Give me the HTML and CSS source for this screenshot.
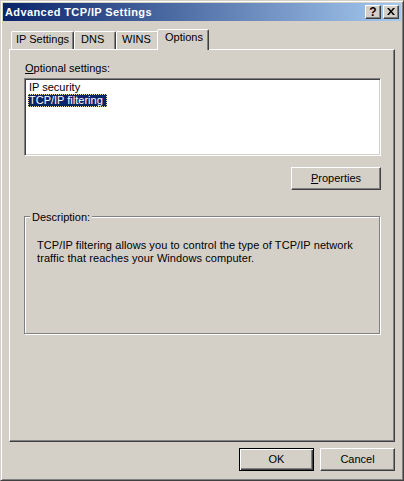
FILE: index.html
```html
<!DOCTYPE html>
<html>
<head>
<meta charset="utf-8">
<link rel="stylesheet" href="styles.css">
</head>
<body>
<div class="window">
  <div class="titlebar">
    <span class="title">Advanced TCP/IP Settings</span>
    <div class="caption-buttons">
      <div class="cbtn help">?</div>
      <div class="cbtn close">
        <svg width="8" height="7" viewBox="0 0 8 7"><path d="M0 0h2l2 2.4 2-2.4h2L5 3.5 8 7H6L4 4.6 2 7H0l3-3.5z" fill="#000"/></svg>
      </div>
    </div>
  </div>
  <div class="body">
    <div class="tabs">
      <div class="tab tab-ip">IP Settings</div>
      <div class="tab tab-dns">DNS</div>
      <div class="tab tab-wins">WINS</div>
      <div class="tab tab-options active">Options</div>
    </div>
    <div class="panel">
      <div class="label"><u>O</u>ptional settings:</div>
      <div class="listbox">
        <div class="item"><span>IP security</span></div>
        <div class="item selected"><span>TCP/IP filtering</span></div>
      </div>
      <div class="row-right"><button class="btn props"><u>P</u>roperties</button></div>
      <div class="group">
        <div class="group-label">Description:</div>
        <p class="desc">TCP/IP filtering allows you to control the type of TCP/IP network<br>traffic that reaches your Windows computer.</p>
      </div>
    </div>
    <div class="footer">
      <button class="btn default">OK</button>
      <button class="btn">Cancel</button>
    </div>
  </div>
</div>
</body>
</html>
```
FILE: styles.css
```css
html, body {
  margin: 0;
  padding: 0;
  background: #d4d0c8;
}
body {
  font-family: "Liberation Sans", Arial, sans-serif;
  font-size: 11px;
  line-height: 13px;
  color: #000;
}
.window {
  width: 404px;
  height: 481px;
  box-sizing: border-box;
  border: 1px solid;
  border-color: #d4d0c8 #404040 #404040 #d4d0c8;
  box-shadow: inset 1px 1px #fff, inset -1px -1px #808080;
  padding: 2px;
  background: #d4d0c8;
  display: flex;
  flex-direction: column;
}
.titlebar {
  height: 18px;
  flex: none;
  background: linear-gradient(to right, #0a246a, #a6caf0);
  display: flex;
  align-items: center;
  justify-content: space-between;
  padding-left: 2px;
}
.title {
  color: #fff;
  font-weight: bold;
  letter-spacing: 0.4px;
}
.caption-buttons {
  display: flex;
  gap: 2px;
  margin-right: 2px;
}
.cbtn {
  width: 16px;
  height: 14px;
  box-sizing: border-box;
  background: #d4d0c8;
  border: 1px solid;
  border-color: #fff #404040 #404040 #fff;
  box-shadow: inset -1px -1px #808080;
  display: flex;
  align-items: center;
  justify-content: center;
}
.help {
  font-weight: bold;
  font-size: 12px;
  line-height: 12px;
  padding-bottom: 1px;
}
.close svg {
  display: block;
  margin-bottom: 1px;
}
.body {
  flex: 1;
  display: flex;
  flex-direction: column;
  padding-top: 8px;
}
.tabs {
  display: flex;
  align-items: flex-end;
  height: 20px;
  margin-left: 8px;
}
.tab {
  box-sizing: border-box;
  height: 18px;
  border: 1px solid;
  border-bottom: none;
  border-color: #fff #404040 transparent #fff;
  border-radius: 2px 2px 0 0;
  box-shadow: inset -1px 0 #808080;
  padding-top: 1px;
  white-space: nowrap;
}
.tab-ip { width: 63px; padding-left: 4px; }
.tab-dns { width: 42px; padding-left: 6px; }
.tab-wins { width: 43px; padding-left: 5px; }
.tab-options { width: 52px; padding-left: 7px; }
.tab.active {
  height: 21px;
  margin: 0 -2px -1px -2px;
  position: relative;
  background: #d4d0c8;
  padding-top: 1px;
}
.panel {
  flex: none;
  height: 393px;
  margin: 0 6px;
  box-sizing: border-box;
  border-top: 1px solid #fff;
  border-left: 1px solid #fff;
  border-right: 1px solid #404040;
  border-bottom: 1px solid #404040;
  box-shadow: inset -1px -1px #808080;
  padding: 12px 13px 0 14px;
  display: flex;
  flex-direction: column;
}
.label {
  margin-left: 1px;
  margin-bottom: 3px;
}
.listbox {
  height: 78px;
  box-sizing: border-box;
  background: #fff;
  border: 1px solid;
  border-color: #808080 #fff #fff #808080;
  box-shadow: inset 1px 1px #404040, inset -1px -1px #d4d0c8;
  padding: 2px 0 0 3px;
}
.item span {
  display: inline-block;
  padding: 0 2px 0 1px;
}
.item.selected span {
  background: #0a246a;
  color: #fff;
  padding-right: 4px;
  outline: 1px dotted #f5db95;
  outline-offset: -1px;
}
.row-right {
  display: flex;
  justify-content: flex-end;
  margin-top: 11px;
}
.btn {
  font: inherit;
  color: #000;
  width: 75px;
  height: 23px;
  box-sizing: border-box;
  background: #d4d0c8;
  border: 1px solid;
  border-color: #fff #404040 #404040 #fff;
  box-shadow: inset -1px -1px #808080;
  padding: 0;
  margin: 0;
}
.btn.props {
  width: 90px;
}
.btn.default {
  border: 1px solid #000;
  box-shadow: inset 1px 1px #fff, inset -1px -1px #404040, inset -2px -2px #808080;
}
.group {
  margin-top: 26px;
  margin-right: 1px;
  height: 118px;
  box-sizing: border-box;
  border: 1px solid #808080;
  box-shadow: inset 1px 1px #fff, 1px 1px #fff;
}
.group-label {
  display: inline-block;
  margin: -6px 0 0 5px;
  padding: 0 2px;
  background: #d4d0c8;
  vertical-align: top;
}
.desc {
  margin: 9px 0 0 12px;
  letter-spacing: 0.08px;
}
.footer {
  display: flex;
  justify-content: flex-end;
  gap: 6px;
  margin: 6px 6px 0 0;
}
```
